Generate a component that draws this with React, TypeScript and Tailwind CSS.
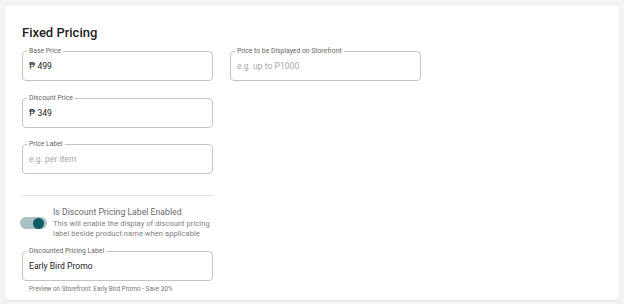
import type { ReactNode } from 'react'

type FieldProps = {
  label: string
  value?: string
  placeholder?: string
}

function OutlinedField({ label, value, placeholder }: FieldProps) {
  return (
    <div className="relative flex h-[30px] w-[191px] items-center rounded-[4px] border border-[#c4c4c4] px-[6px]">
      <span className="absolute -top-[5px] left-[4px] bg-white px-[2px] text-[6.8px] leading-[8px] text-[#666666]">
        {label}
      </span>
      {value ? (
        <span className="text-[8.6px] leading-[12px] text-[#222222]">{value}</span>
      ) : (
        <span className="text-[8.6px] leading-[12px] text-[#a8a8a8]">{placeholder}</span>
      )}
    </div>
  )
}

function Card({ children }: { children: ReactNode }) {
  return (
    <div className="mx-[5px] mt-[5px] h-[294px] w-[614px] rounded-[4px] bg-white shadow-[0_1px_2px_rgba(0,0,0,0.08)]">
      {children}
    </div>
  )
}

function App() {
  return (
    <div className="h-[304px] w-[624px] overflow-hidden bg-[#f4f4f4] pt-px font-['Roboto',sans-serif]">
      <Card>
        <div className="px-[17px] pt-[19px]">
          <h2 className="text-[13px] font-medium leading-[16px] text-[#222222]">Fixed Pricing</h2>
          <div className="mt-[10px] flex gap-[17px]">
            <div className="flex flex-col">
              <div className="flex flex-col gap-[16.7px]">
                <OutlinedField label="Base Price" value="₱ 499" />
                <OutlinedField label="Discount Price" value="₱ 349" />
                <OutlinedField label="Price Label" placeholder="e.g. per item" />
              </div>
              <div className="mt-[21px] h-px w-[191px] bg-[#e3e3e3]" />
              <div className="mt-[11px] flex items-center gap-[6px]">
                <div className="-ml-[2px] flex h-[12px] w-[27px] items-center justify-end rounded-full bg-[#a9c1c2] pr-[3px]">
                  <div className="h-[11px] w-[11px] rounded-full bg-[#0d5c63]" />
                </div>
                <div className="flex flex-col">
                  <span className="text-[8.7px] leading-[11px] text-[#6a6a6a]">
                    Is Discount Pricing Label Enabled
                  </span>
                  <span className="mt-[1px] text-[7.5px] leading-[10px] tracking-[0.01em] text-[#808080]">
                    This will enable the display of discount pricing
                    <br />
                    label beside product name when applicable
                  </span>
                </div>
              </div>
              <div className="mt-[12px]">
                <OutlinedField label="Discounted Pricing Label" value="Early Bird Promo" />
              </div>
              <p className="mt-[4px] pl-[7px] text-[6.4px] leading-[9px] text-[#777777]">
                Preview on Storefront: Early Bird Promo - Save 30%
              </p>
            </div>
            <div>
              <OutlinedField label="Price to be Displayed on Storefront" placeholder="e.g. up to P1000" />
            </div>
          </div>
        </div>
      </Card>
    </div>
  )
}

export default App
